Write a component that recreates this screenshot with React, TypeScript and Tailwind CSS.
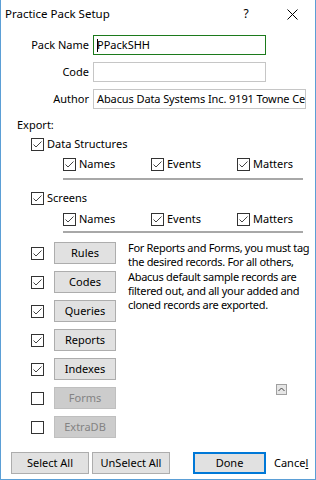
import React from "react";

const font = { fontFamily: '"Noto Sans", "Segoe UI", sans-serif' };

const Check = ({ checked = true }: { checked?: boolean }) => (
  <div className="w-[13px] h-[13px] border border-[#333333] bg-white flex items-center justify-center shrink-0">
    {checked && (
      <svg width="11" height="11" viewBox="0 0 11 11">
        <polyline points="1.5,5.5 4,8 9.5,2.5" fill="none" stroke="#444444" strokeWidth="1" />
      </svg>
    )}
  </div>
);

const CheckLabel = ({ label, className = "" }: { label: string; className?: string }) => (
  <div className={`flex items-center gap-[3px] ${className}`}>
    <Check />
    <span>{label}</span>
  </div>
);

const SubRow = () => (
  <div className="flex items-center h-[16px] pl-[62px]">
    <CheckLabel label="Names" className="w-[88px]" />
    <CheckLabel label="Events" className="w-[86px]" />
    <CheckLabel label="Matters" />
  </div>
);

const exportItems = [
  { label: "Rules", checked: true, disabled: false },
  { label: "Codes", checked: true, disabled: false },
  { label: "Queries", checked: true, disabled: false },
  { label: "Reports", checked: true, disabled: false },
  { label: "Indexes", checked: true, disabled: false },
  { label: "Forms", checked: false, disabled: true },
  { label: "ExtraDB", checked: false, disabled: true },
];

const noteLines = [
  "For Reports and Forms, you must tag",
  "the desired records. For all others,",
  "Abacus default sample records are",
  "filtered out, and all your added and",
  "cloned records are exported.",
];

export default function App() {
  return (
    <div
      className="w-[316px] h-[480px] bg-white border-l border-r border-b border-[#5b9fd6] text-[11px] text-black flex flex-col overflow-hidden"
      style={font}
    >
      {/* title bar */}
      <div className="h-[28px] flex items-center shrink-0">
        <span className="pl-[4px] text-[11.5px]">Practice Pack Setup</span>
        <span className="ml-auto w-[46px] text-center text-[12px]">?</span>
        <span className="w-[46px] flex justify-center">
          <svg width="11" height="11" viewBox="0 0 11 11">
            <path d="M0.5 0.5 L10.5 10.5 M10.5 0.5 L0.5 10.5" stroke="#000" strokeWidth="1" />
          </svg>
        </span>
      </div>

      {/* fields */}
      <div className="flex flex-col gap-[7px] mt-[7px]">
        <div className="flex items-center h-[20px]">
          <span className="w-[88px] text-right">Pack Name</span>
          <div className="ml-[4px] w-[173px] h-[20px] border border-[#1c7a1c] flex items-center pl-[3px]">
            <span className="w-px h-[13px] bg-black -mr-[1px]"></span>
            <span>PPackSHH</span>
          </div>
        </div>
        <div className="flex items-center h-[20px]">
          <span className="w-[88px] text-right">Code</span>
          <div className="ml-[4px] w-[173px] h-[20px] border border-[#c6c6c6]"></div>
        </div>
        <div className="flex items-center h-[20px]">
          <span className="w-[88px] text-right">Author</span>
          <div className="ml-[4px] w-[213px] h-[20px] border border-[#c6c6c6] flex items-center pl-[3px] overflow-hidden whitespace-nowrap tracking-[-0.1px]">
            Abacus Data Systems Inc. 9191 Towne Cer
          </div>
        </div>
      </div>

      {/* export */}
      <div className="h-[16px] flex items-center mt-[8px] pl-[16px]">Export:</div>
      <div className="h-[16px] flex items-center mt-[3px] pl-[30px]">
        <CheckLabel label="Data Structures" />
      </div>
      <div className="mt-[4px]">
        <SubRow />
      </div>
      <div className="mt-[6px] ml-[62px] w-[240px] h-[2px] bg-[#a8a8a8]"></div>
      <div className="h-[16px] flex items-center mt-[10px] pl-[30px]">
        <CheckLabel label="Screens" />
      </div>
      <div className="mt-[5px]">
        <SubRow />
      </div>
      <div className="mt-[4px] ml-[62px] w-[240px] h-[2px] bg-[#a8a8a8]"></div>

      {/* items */}
      <div className="flex mt-[9px]">
        <div className="flex flex-col gap-[7px] pl-[30px]">
          {exportItems.map((it) => (
            <div key={it.label} className="flex items-center h-[22px]">
              <Check checked={it.checked} />
              <div
                className={`ml-[10px] w-[62px] h-[22px] flex items-center justify-center border ${
                  it.disabled
                    ? "bg-[#cccccc] border-[#bfbfbf] text-[#838383]"
                    : "bg-[#e1e1e1] border-[#adadad]"
                }`}
              >
                {it.label}
              </div>
            </div>
          ))}
        </div>
        <div className="ml-[12px] flex flex-col">
          <div className="leading-[14.3px] -mt-[1px] whitespace-nowrap tracking-[-0.3px]">
            {noteLines.map((l) => (
              <div key={l}>{l}</div>
            ))}
          </div>
          <div className="mt-[72px] ml-[148px] w-[11px] h-[11px] bg-[#e6e6e6] border border-[#a0a0a0] flex items-center justify-center">
            <svg width="7" height="5" viewBox="0 0 7 5">
              <polyline points="0.5,4 3.5,1 6.5,4" fill="none" stroke="#444" strokeWidth="1" />
            </svg>
          </div>
        </div>
      </div>

      {/* bottom */}
      <div className="flex items-center mt-[14px] pl-[10px]">
        <div className="w-[78px] h-[22px] bg-[#e1e1e1] border border-[#adadad] flex items-center justify-center">Select All</div>
        <div className="ml-[3px] w-[78px] h-[22px] bg-[#e1e1e1] border border-[#adadad] flex items-center justify-center">UnSelect All</div>
        <div className="ml-[23px] w-[73px] h-[22px] bg-[#e1e1e1] border-2 border-[#0078d7] flex items-center justify-center">Done</div>
        <div className="ml-[8px] whitespace-nowrap">
          Cance<span className="underline">l</span>
        </div>
      </div>
    </div>
  );
}
